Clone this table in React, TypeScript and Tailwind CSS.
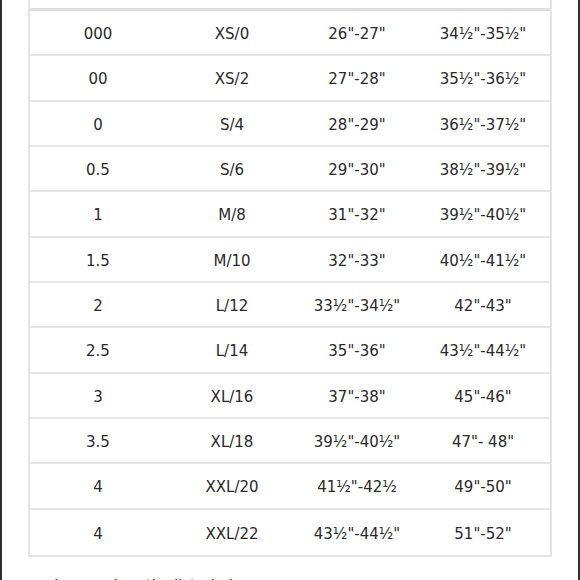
const rows: [string, string, string, string][] = [
  ["000", "XS/0", "26\"-27\"", "34½\"-35½\""],
  ["00", "XS/2", "27\"-28\"", "35½\"-36½\""],
  ["0", "S/4", "28\"-29\"", "36½\"-37½\""],
  ["0.5", "S/6", "29\"-30\"", "38½\"-39½\""],
  ["1", "M/8", "31\"-32\"", "39½\"-40½\""],
  ["1.5", "M/10", "32\"-33\"", "40½\"-41½\""],
  ["2", "L/12", "33½\"-34½\"", "42\"-43\""],
  ["2.5", "L/14", "35\"-36\"", "43½\"-44½\""],
  ["3", "XL/16", "37\"-38\"", "45\"-46\""],
  ["3.5", "XL/18", "39½\"-40½\"", "47\"- 48\""],
  ["4", "XXL/20", "41½\"-42½", "49\"-50\""],
  ["4", "XXL/22", "43½\"-44½\"", "51\"-52\""],
];

export default function App() {
  return (
    <div
      className="w-[580px] h-[580px] overflow-hidden bg-white border-x-2 border-[#2e2e2e] text-[#2a2a2a]"
      style={{ fontFamily: '"DejaVu Sans", "Noto Sans", sans-serif' }}
    >
      <div className="px-[26px]">
        {/* size table */}
        <div className="border-x-2 border-b-2 border-[#e4e4e4]">
          <div className="h-[11px] border-b-[3px] border-[#dedede]" />
          {rows.map((r, i) => (
            <div
              key={i}
              className={
                "grid grid-cols-[136px_132px_118px_1fr] items-center pt-[3px] h-[45.33px] text-[15px] " +
                (i < rows.length - 1 ? "border-b-2 border-[#e6e6e6]" : "")
              }
            >
              {r.map((c, j) => (
                <div key={j} className="text-center whitespace-nowrap">
                  {c}
                </div>
              ))}
            </div>
          ))}
        </div>
        <p className="mt-[19px] pl-[26px] text-[15px] leading-5">
          Inseam lengths listed above
        </p>
      </div>
    </div>
  );
}
